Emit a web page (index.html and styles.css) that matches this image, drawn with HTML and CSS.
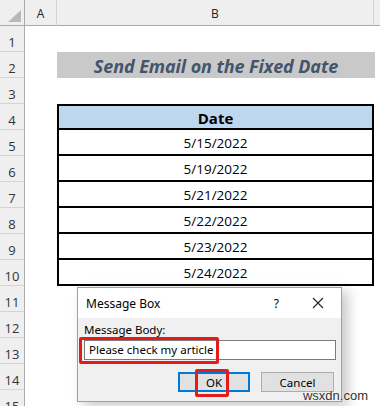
FILE: index.html
```html
<!DOCTYPE html>
<html lang="en">
<head>
    <meta charset="UTF-8">
    <title>Send Email on the Fixed Date</title>
    <link rel="stylesheet" href="styles.css">
</head>
<body>
    <div class="sheet">
        <!-- column headers -->
        <div class="corner"><span class="tri"></span></div>
        <div class="colhead">A</div>
        <div class="colhead">B</div>
        <div class="colhead last"></div>

        <div class="rowhead">1</div><div></div><div></div><div></div>
        <div class="rowhead">2</div><div></div><div class="title">Send Email on the Fixed Date</div><div></div>
        <div class="rowhead">3</div><div></div><div></div><div></div>
        <div class="rowhead">4</div><div></div><div class="cell head">Date</div><div></div>
        <div class="rowhead">5</div><div></div><div class="cell">5/15/2022</div><div></div>
        <div class="rowhead">6</div><div></div><div class="cell">5/19/2022</div><div></div>
        <div class="rowhead">7</div><div></div><div class="cell">5/21/2022</div><div></div>
        <div class="rowhead">8</div><div></div><div class="cell">5/22/2022</div><div></div>
        <div class="rowhead">9</div><div></div><div class="cell">5/23/2022</div><div></div>
        <div class="rowhead">10</div><div></div><div class="cell">5/24/2022</div><div></div>
        <div class="rowhead">11</div><div></div><div></div><div></div>
        <div class="rowhead">12</div><div></div><div></div><div></div>
        <div class="rowhead">13</div><div></div><div></div><div></div>
        <div class="rowhead">14</div><div></div><div></div><div></div>
        <div class="rowhead">15</div><div></div><div></div><div></div>
    </div>

    <div class="dialog">
        <div class="dialog-bar">
            <span class="dialog-title">Message Box</span>
            <span class="dialog-help">?</span>
            <svg class="dialog-close" width="12" height="12" viewBox="0 0 12 12">
                <path d="M1 1 L11 11 M11 1 L1 11" stroke="#222" stroke-width="1.1" fill="none"/>
            </svg>
        </div>
        <div class="dialog-body">
            <div class="label">Message Body:</div>
            <div class="input">Please check my article</div>
            <div class="buttons">
                <div class="btn ok">OK</div>
                <div class="btn">Cancel</div>
            </div>
            <div class="mark mark-input"></div>
            <div class="mark mark-ok"></div>
        </div>
    </div>

    <div class="watermark">wsxdn.com</div>
</body>
</html>
```

FILE: styles.css
```css
body {
    margin: 0;
    width: 380px;
    height: 406px;
    overflow: hidden;
    position: relative;
    background: #fff;
    font-family: 'Open Sans', sans-serif;
    color: #000;
}

.sheet {
    display: grid;
    grid-template-columns: 25px 32px 317px 1fr;
    grid-auto-rows: 26px;
}

.corner,
.colhead {
    background: #efefef;
    border-bottom: 1px solid #ababab;
    border-right: 1px solid #d4d4d4;
    box-sizing: border-box;
    position: relative;
}

.colhead {
    display: flex;
    align-items: center;
    justify-content: center;
    font-size: 12px;
    color: #222;
    padding-top: 1px;
}

.colhead.last {
    border-right: none;
}

.corner {
    border-right: 1px solid #ababab;
}

.tri {
    position: absolute;
    right: 3px;
    bottom: 3px;
    width: 0;
    height: 0;
    border-left: 13px solid transparent;
    border-bottom: 12px solid #b8b8b8;
}

.rowhead {
    background: #efefef;
    border-right: 1px solid #ababab;
    border-bottom: 1px solid #d4d4d4;
    box-sizing: border-box;
    display: flex;
    align-items: center;
    justify-content: center;
    font-size: 13px;
    color: #333;
    padding-top: 6px;
}

.title {
    background: #c9c9c9;
    display: flex;
    align-items: center;
    justify-content: center;
    font-weight: 700;
    font-style: italic;
    font-size: 18px;
    letter-spacing: -0.1px;
    color: #44546a;
    margin-right: -1px;
    padding-top: 1px;
}

.cell {
    border: 2px solid #000;
    border-top: none;
    box-sizing: border-box;
    display: flex;
    align-items: center;
    justify-content: center;
    font-size: 13.5px;
    padding-top: 1px;
}

.cell.head {
    border-top: 2px solid #000;
    background: #bdd7ee;
    font-weight: 700;
    font-size: 15px;
}

.dialog {
    position: absolute;
    left: 77px;
    top: 287px;
    width: 265px;
    height: 115px;
    border: 1px solid #a0a0a0;
    box-sizing: border-box;
    background: #f0f0f0;
    box-shadow: 6px 4px 12px rgba(0, 0, 0, 0.22);
    font-family: 'Noto Sans', sans-serif;
    font-size: 11.5px;
    color: #000;
    display: flex;
    flex-direction: column;
}

.dialog-bar {
    height: 30px;
    background: #fff;
    display: flex;
    align-items: center;
    padding: 0 17px 0 8px;
}

.dialog-title {
    flex: 1;
    font-size: 12px;
}

.dialog-help {
    font-size: 12px;
    margin-right: 33px;
}

.dialog-body {
    position: relative;
    flex: 1;
    padding: 5px 5px 0 6px;
}

.label {
    line-height: 14px;
}

.input {
    margin-top: 3px;
    height: 20px;
    width: 252px;
    box-sizing: border-box;
    border: 1px solid #7a7a7a;
    background: #fff;
    padding: 0 4px;
    line-height: 18px;
}

.buttons {
    display: flex;
    justify-content: flex-end;
    gap: 11px;
    margin-top: 12px;
    padding-right: 2px;
}

.btn {
    width: 73px;
    height: 20px;
    box-sizing: border-box;
    background: #e1e1e1;
    border: 1px solid #adadad;
    display: flex;
    align-items: center;
    justify-content: center;
}

.btn.ok {
    width: 72px;
    border: 2px solid #0078d7;
}

.mark {
    position: absolute;
    border: 3px solid #e41b1b;
    border-radius: 2px;
    box-sizing: border-box;
}

.mark-input {
    left: 1px;
    top: 19px;
    width: 140px;
    height: 27px;
}

.mark-ok {
    left: 117px;
    top: 51px;
    width: 34px;
    height: 28px;
}

.watermark {
    position: absolute;
    right: 12px;
    bottom: 3px;
    font-family: 'Liberation Sans', sans-serif;
    font-size: 13px;
    color: #333;
    text-shadow: 0 0 2px #fff;
}
```
